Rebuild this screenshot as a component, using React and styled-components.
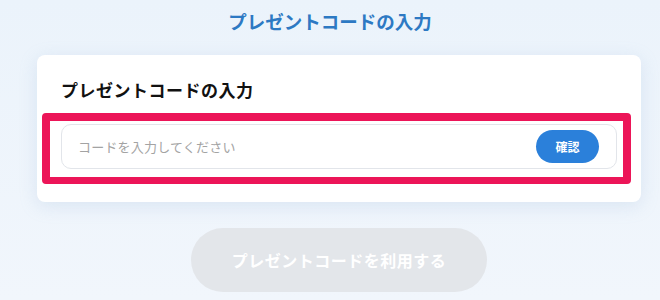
import React from 'react';
import styled, { createGlobalStyle } from 'styled-components';

const GlobalStyle = createGlobalStyle`
  html, body {
    margin: 0;
    padding: 0;
  }
  body {
    background: linear-gradient(180deg, #ebf3fb 0%, #f1f6fc 100%);
    min-height: 300px;
    font-family: "Noto Sans CJK JP", "Noto Sans", sans-serif;
  }
`;

export default function App() {
  return (
    <>
      <GlobalStyle />
      <Page>
        <Title>プレゼントコードの入力</Title>
        <Content>
          <Card>
            <CardHeading>プレゼントコードの入力</CardHeading>
            <Highlight>
              <Field>
                <CodeInput type="text" placeholder="コードを入力してください" />
                <CheckButton type="button">確認</CheckButton>
              </Field>
            </Highlight>
          </Card>
          <SubmitButton type="button" disabled>
            プレゼントコードを利用する
          </SubmitButton>
        </Content>
      </Page>
    </>
  );
}

const Page = styled.div`
  width: 660px;
  height: 300px;
  overflow: hidden;
  display: flex;
  flex-direction: column;
`;

const Title = styled.h1`
  margin: 8px 0 0;
  font-size: 18.5px;
  line-height: 26px;
  font-weight: 700;
  color: #2d79c3;
  text-align: center;
`;

const Content = styled.div`
  margin: 21px 19px 0 37px;
  display: flex;
  flex-direction: column;
  align-items: center;
`;

const Card = styled.section`
  align-self: stretch;
  background: #fff;
  border-radius: 8px;
  box-shadow: 0 4px 18px rgba(140, 175, 210, 0.22);
  padding: 23px 24px 18px;
`;

const CardHeading = styled.h2`
  margin: 0 0 11px;
  font-size: 17px;
  line-height: 24px;
  letter-spacing: 0.5px;
  font-weight: 700;
  color: #111;
`;

const Highlight = styled.div`
  margin: 0 -14px 0 -19px;
  border: 8px solid #ec1558;
  border-bottom-width: 7px;
  border-radius: 4px;
  padding: 3px 6px 8px 11px;
  background: #fff;
`;

const Field = styled.div`
  height: 45px;
  box-sizing: border-box;
  border: 1px solid #e2e5ea;
  border-radius: 10px;
  display: flex;
  align-items: center;
  padding: 0 17px 0 16px;
`;

const CodeInput = styled.input`
  flex: 1;
  border: none;
  outline: none;
  background: transparent;
  font-family: "Noto Sans CJK JP", "Noto Sans", sans-serif;
  font-size: 13px;
  letter-spacing: 0.2px;
  color: #333;
  padding: 0;

  &::placeholder {
    color: #a3a3a3;
  }
`;

const CheckButton = styled.button`
  width: 63px;
  height: 33px;
  border: none;
  border-radius: 17px;
  background: #2b80da;
  color: #fff;
  font-family: "Noto Sans CJK JP", "Noto Sans", sans-serif;
  font-size: 12px;
  font-weight: 700;
  cursor: pointer;
`;

const SubmitButton = styled.button`
  margin-top: 26px;
  width: 296px;
  height: 64px;
  border: none;
  border-radius: 32px;
  background: #e3e6ea;
  color: #fff;
  font-family: "Noto Sans CJK JP", "Noto Sans", sans-serif;
  font-size: 16px;
  font-weight: 700;
  letter-spacing: 0.5px;
`;
